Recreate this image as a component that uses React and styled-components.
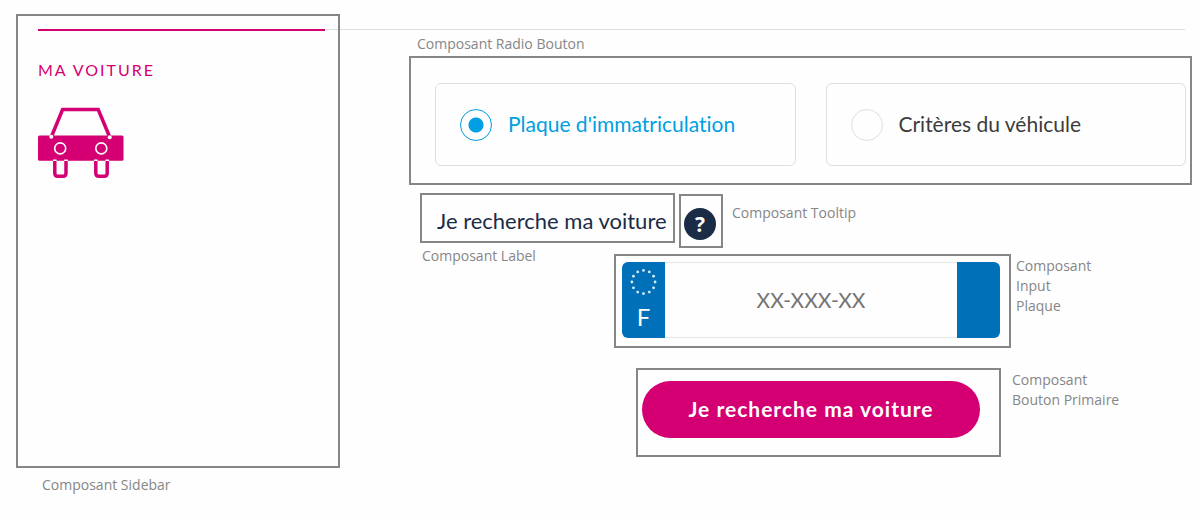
import React, { useState } from "react";
import styled, { createGlobalStyle } from "styled-components";

const GlobalStyle = createGlobalStyle`
  * {
    box-sizing: border-box;
  }
  body {
    margin: 0;
    background: #fefefe;
    font-family: Lato, "Open Sans", sans-serif;
    font-variant-ligatures: none;
    color: #3c3c3b;
  }
`;

const Page = styled.div`
  display: flex;
  align-items: flex-start;
  padding: 14px 8px 0 16px;
`;

const Frame = styled.div`
  border: 2px solid #868686;
`;

const Caption = styled.div`
  font-family: "Open Sans", sans-serif;
  font-size: 14px;
  line-height: 20px;
  color: #868686;
  max-width: ${(props) => props.$width || "none"};
`;

const SidebarColumn = styled.div`
  flex: 0 0 324px;
  ${Caption} {
    margin: 7px 0 0 26px;
  }
`;

const SidebarFrame = styled(Frame).attrs({ as: "aside" })`
  display: block;
  min-height: 454px;
  padding: 13px 0 0 20px;
  .progress {
    display: flex;
    align-items: flex-start;
    .done {
      width: 287px;
      height: 2px;
      background: #d40073;
    }
    .rest {
      flex: 1;
      height: 1px;
      background: #dedede;
    }
  }
  .title {
    margin: 29px 0 27px;
    font-size: 16px;
    line-height: 20px;
    font-weight: 400;
    letter-spacing: 2px;
    color: #d40073;
  }
  svg {
    display: block;
  }
`;

const Main = styled.main`
  flex: 1;
  min-width: 0;
  padding-top: 15px;
`;

const Rule = styled.hr`
  height: 1px;
  margin: 0 7px 0 0;
  border: 0;
  background: #dedede;
`;

const Content = styled.div`
  padding: 4px 0 0 69px;
  > ${Caption} {
    margin: 0 0 2px 8px;
  }
`;

const RadioFrame = styled(Frame)`
  display: grid;
  grid-template-columns: 1fr 1fr;
  gap: 30px;
  padding: 25px 4px 17px 24px;
`;

const RadioCard = styled.label`
  display: flex;
  align-items: center;
  gap: 16px;
  height: 83px;
  padding: 0 24px;
  border: 1px solid #dedede;
  border-radius: 6px;
  font-size: 21px;
  line-height: 28px;
  cursor: pointer;
  color: ${(props) => (props.$checked ? "#009ee3" : "#3c3c3b")};
  input {
    appearance: none;
    flex: none;
    width: 32px;
    height: 32px;
    margin: 0;
    border: 1px solid #dedede;
    border-radius: 50%;
    cursor: pointer;
    &:checked {
      border-color: #009ee3;
      background: radial-gradient(circle, #009ee3 7px, transparent 8px);
    }
  }
  span {
    padding-bottom: 2px;
  }
`;

const LabelRow = styled.div`
  display: flex;
  align-items: flex-start;
  gap: 4px;
  margin: 8px 0 -12px 11px;
  .label ${Caption} {
    margin: 3px 0 0 2px;
  }
  > ${Caption} {
    margin: 10px 0 0 5px;
  }
`;

const LabelFrame = styled(Frame)`
  width: 255px;
  height: 50px;
  padding: 12px 0 0 15px;
  label {
    display: block;
    font-size: 22px;
    line-height: 28px;
    white-space: nowrap;
    color: #1b2c46;
  }
`;

const TooltipFrame = styled(Frame)`
  width: 44px;
  height: 54px;
  margin-top: 1px;
  padding: 12px 0 0 3px;
`;

const TooltipButton = styled.button`
  display: block;
  width: 32px;
  height: 32px;
  padding: 0;
  border: 0;
  border-radius: 50%;
  background: #1b2c46;
  color: #fff;
  font: 700 21px/30px "Open Sans", sans-serif;
  text-align: center;
  cursor: pointer;
`;

const Row = styled.div`
  display: flex;
  align-items: flex-start;
  margin-left: ${(props) => props.$indent};
  margin-bottom: 20px;
  gap: ${(props) => props.$gap};
  ${Caption} {
    padding-top: 2px;
  }
`;

const PlateFrame = styled(Frame)`
  width: 397px;
  padding: 6px 9px 8px 6px;
`;

const Plate = styled.div`
  display: flex;
  height: 76px;
  border-radius: 6px;
  overflow: hidden;
  .band {
    flex: 0 0 43px;
    display: flex;
    flex-direction: column;
    align-items: center;
    gap: 7px;
    padding-top: 6px;
    background: #0070b9;
    color: #fff;
    font-size: 24px;
    line-height: 28px;
  }
  input {
    flex: 1;
    min-width: 0;
    padding: 0;
    border: 0;
    border-top: 1px solid #e6e6e6;
    border-bottom: 1px solid #e6e6e6;
    background: transparent;
    font: 400 21px/28px Lato, sans-serif;
    text-align: center;
    color: #3c3c3b;
    &::placeholder {
      color: #757575;
    }
  }
`;

const ButtonFrame = styled(Frame)`
  width: 365px;
  padding: 11px 19px 17px 4px;
`;

const PrimaryButton = styled.button`
  display: block;
  width: 100%;
  height: 57px;
  padding: 0 0 2px;
  border: 0;
  border-radius: 29px;
  background: #d40073;
  color: #fff;
  font: 700 21px/28px Lato, sans-serif;
  letter-spacing: 1px;
  cursor: pointer;
`;

function CarIcon() {
  return (
    <svg width="86" height="72" viewBox="0 0 86 72" fill="none">
      <path d="M13.3 30 24.6 2.500h35.600L71.700 30" stroke="#d40073" strokeWidth="3.500" />
      <rect y="28.400" width="85.500" height="25.400" rx="1.500" fill="#d40073" />
      <path
        d="M16.800 54v12.300q0 3 3 3h5.200q3 0 3-3V54M57.800 54v12.300q0 3 3 3h5.400q3 0 3-3V54"
        stroke="#d40073"
        strokeWidth="3.500"
      />
      <circle cx="13.300" cy="29.800" r="2" fill="#fff" />
      <circle cx="71.700" cy="30.200" r="2" fill="#fff" />
      <path d="M16.800 54v-1.500M28 54v-1.500M57.800 54v-1.500M69.200 54v-1.500" stroke="#fff" strokeWidth="3.500" />
      <circle cx="22.200" cy="41.400" r="5.500" stroke="#fff" strokeWidth="1.600" />
      <circle cx="63.300" cy="41.400" r="5.500" stroke="#fff" strokeWidth="1.600" />
    </svg>
  );
}

function Stars() {
  const stars = Array.from({ length: 12 }, (_, i) => (i * Math.PI) / 6);
  return (
    <svg width="28" height="28" viewBox="0 0 28 28">
      {stars.map((a) => (
        <circle key={a} cx={13.5 + 11.6 * Math.cos(a)} cy={14 + 11.6 * Math.sin(a)} r="1.4" fill="#d9ebf7" />
      ))}
    </svg>
  );
}

function Sidebar() {
  return (
    <SidebarColumn>
      <SidebarFrame>
        <div className="progress">
          <div className="done" />
          <div className="rest" />
        </div>
        <h2 className="title">MA VOITURE</h2>
        <CarIcon />
      </SidebarFrame>
      <Caption>Composant Sidebar</Caption>
    </SidebarColumn>
  );
}

function RadioButton({ value, label, selected, onSelect }) {
  const checked = selected === value;
  return (
    <RadioCard $checked={checked}>
      <input
        type="radio"
        name="search"
        value={value}
        checked={checked}
        onChange={() => onSelect(value)}
      />
      <span>{label}</span>
    </RadioCard>
  );
}

function App() {
  const [search, setSearch] = useState("plaque");
  const [plate, setPlate] = useState("");

  return (
    <>
      <GlobalStyle />
      <Page>
        <Sidebar />
        <Main>
          <Rule />
          <Content>
            <Caption>Composant Radio Bouton</Caption>
            <RadioFrame>
              <RadioButton value="plaque" label="Plaque d'immatriculation" selected={search} onSelect={setSearch} />
              <RadioButton value="criteres" label="Critères du véhicule" selected={search} onSelect={setSearch} />
            </RadioFrame>
            <LabelRow>
              <div className="label">
                <LabelFrame>
                  <label htmlFor="plate">Je recherche ma voiture</label>
                </LabelFrame>
                <Caption>Composant Label</Caption>
              </div>
              <TooltipFrame>
                <TooltipButton type="button">?</TooltipButton>
              </TooltipFrame>
              <Caption>Composant Tooltip</Caption>
            </LabelRow>
            <Row $indent="205px" $gap="5px">
              <PlateFrame>
                <Plate>
                  <div className="band">
                    <Stars />
                    <span>F</span>
                  </div>
                  <input
                    id="plate"
                    type="text"
                    placeholder="XX-XXX-XX"
                    value={plate}
                    onChange={(e) => setPlate(e.target.value)}
                  />
                  <div className="band" />
                </Plate>
              </PlateFrame>
              <Caption $width="80px">Composant Input Plaque</Caption>
            </Row>
            <Row $indent="227px" $gap="11px">
              <ButtonFrame>
                <PrimaryButton type="button">Je recherche ma voiture</PrimaryButton>
              </ButtonFrame>
              <Caption $width="120px">Composant Bouton Primaire</Caption>
            </Row>
          </Content>
        </Main>
      </Page>
    </>
  );
}

export default App;
